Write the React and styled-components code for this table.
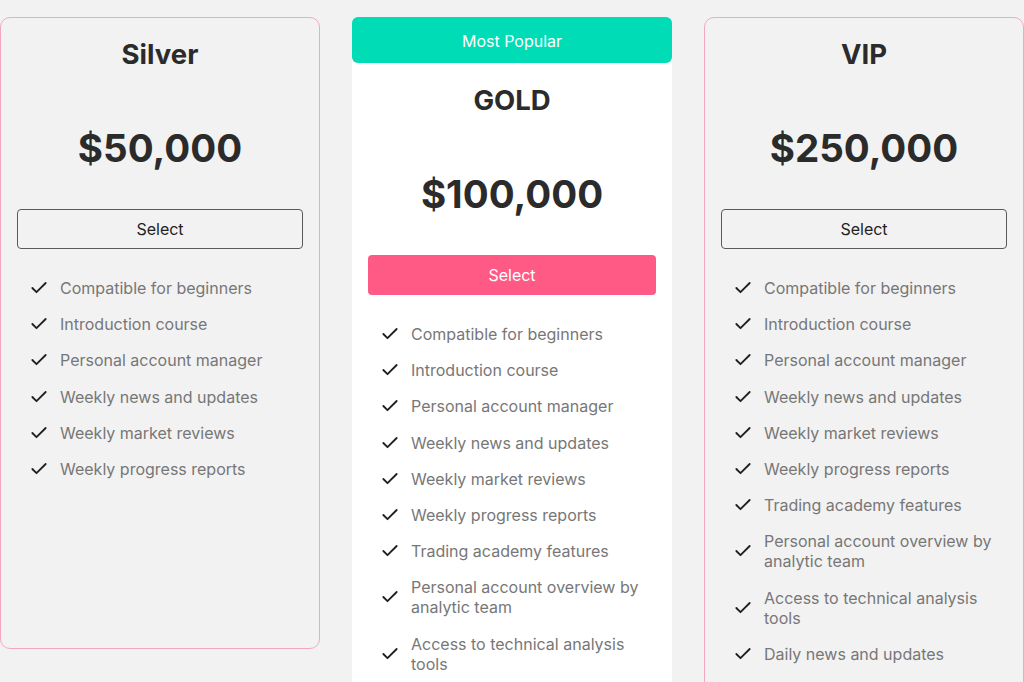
import React from 'react';
import styled, { createGlobalStyle } from 'styled-components';
import { Check } from 'lucide-react';

const baseFeatures = [
  'Compatible for beginners',
  'Introduction course',
  'Personal account manager',
  'Weekly news and updates',
  'Weekly market reviews',
  'Weekly progress reports',
];

const extraFeatures = [
  'Trading academy features',
  'Personal account overview by analytic team',
  'Access to technical analysis tools',
];

const plans = [
  { id: 'silver', name: 'Silver', price: '$50,000', features: baseFeatures },
  {
    id: 'gold',
    name: 'GOLD',
    price: '$100,000',
    popular: true,
    features: [...baseFeatures, ...extraFeatures],
  },
  {
    id: 'vip',
    name: 'VIP',
    price: '$250,000',
    features: [...baseFeatures, ...extraFeatures, 'Daily news and updates'],
  },
];

const GlobalStyle = createGlobalStyle`
  html, body {
    margin: 0;
    padding: 0;
    overflow: hidden;
    background: #f2f2f2;
    font-family: Inter, 'Liberation Sans', sans-serif;
  }
  * {
    box-sizing: border-box;
  }
`;

const App = () => {
  return (
    <>
      <GlobalStyle />
      <PlansRow>
        {plans.map(plan => (
          <Card key={plan.id} featured={plan.popular}>
            {plan.popular && <Banner>Most Popular</Banner>}
            <Title featured={plan.popular}>{plan.name}</Title>
            <Price>{plan.price}</Price>
            <SelectButton featured={plan.popular}>Select</SelectButton>
            <FeatureList>
              {plan.features.map(item => (
                <FeatureItem key={item}>
                  <CheckIcon size={20} strokeWidth={2.2} />
                  <span>{item}</span>
                </FeatureItem>
              ))}
            </FeatureList>
          </Card>
        ))}
      </PlansRow>
    </>
  );
};

const PlansRow = styled.div`
  display: flex;
  align-items: flex-start;
  gap: 32px;
  padding-top: 17px;
`;

const Card = styled.div`
  display: flex;
  flex-direction: column;
  width: 320px;
  flex-shrink: 0;
  min-height: 632px;
  padding: 0 16px 30px;
  background: ${p => (p.featured ? '#ffffff' : '#f2f2f2')};
  border: ${p => (p.featured ? 'none' : '1px solid #f2a9bd')};
  border-radius: ${p => (p.featured ? '6px' : '10px')};
`;

const Banner = styled.div`
  height: 46px;
  margin: 0 -16px;
  padding-top: 2px;
  display: flex;
  align-items: center;
  justify-content: center;
  background: #00dcb5;
  color: #ffffff;
  font-size: 16px;
  border-radius: 6px;
`;

const Title = styled.h2`
  margin: ${p => (p.featured ? '20px' : '19px')} 0 0;
  font-size: 27.5px;
  line-height: 34px;
  font-weight: 700;
  text-align: center;
  color: #2b2b2b;
`;

const Price = styled.div`
  margin-top: 53px;
  font-size: 38.5px;
  line-height: 48px;
  font-weight: 700;
  text-align: center;
  color: #2b2b2b;
`;

const SelectButton = styled.button`
  margin-top: 37px;
  height: 40px;
  width: 100%;
  font-family: inherit;
  font-size: 16px;
  border-radius: 4px;
  cursor: pointer;
  color: ${p => (p.featured ? '#ffffff' : '#222222')};
  background: ${p => (p.featured ? '#ff5a86' : 'transparent')};
  border: ${p => (p.featured ? 'none' : '1px solid #5a5a5a')};
`;

const FeatureList = styled.ul`
  list-style: none;
  margin: 29px 0 0;
  padding: 0 4px 0 12px;
  display: flex;
  flex-direction: column;
  gap: 16.2px;
`;

const FeatureItem = styled.li`
  display: flex;
  align-items: center;
  gap: 11px;
  font-size: 16px;
  line-height: 20px;
  color: #777777;
`;

const CheckIcon = styled(Check)`
  flex-shrink: 0;
  color: #1f1f1f;
`;

export default App;
